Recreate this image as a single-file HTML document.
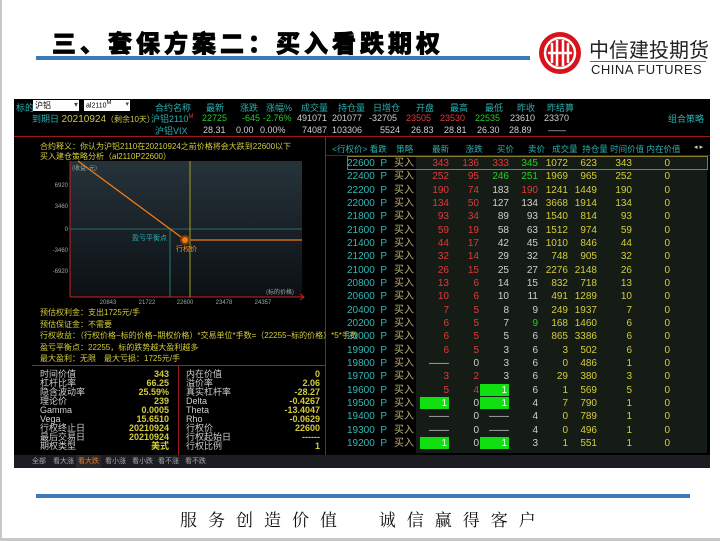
<!DOCTYPE html>
<html><head><meta charset="utf-8"><style>
*{margin:0;padding:0;box-sizing:border-box}
body{width:720px;height:541px;background:#fff;position:relative;overflow:hidden;font-family:"Liberation Sans","Noto Sans CJK SC",sans-serif}
.a{position:absolute;white-space:nowrap}
#scr{position:absolute;left:14px;top:99px;width:696px;height:369px;background:#000;overflow:hidden;font-size:9px;color:#c8c8c8}
.hd{color:#2ab0b0}
.r{color:#e03a3a}.g{color:#22d022}.w{color:#cfcfcf}.y{color:#d4cc3a}.t{color:#30b8b8}.k{color:#b9b070}
.row{position:absolute;left:316px;width:380px;height:13px;font-size:10px;line-height:13px}
.row span{position:absolute;text-align:right}
.c0{left:17px;width:36px;text-align:left!important;color:#30b8b8}
.c1{left:47px;width:10px;color:#30b8b8}
.c2{left:60px;width:24px;color:#b9b070}
.c3{left:90px;width:29px}
.c4{left:120px;width:29px}
.c5{left:150px;width:29px}
.c6{left:180px;width:28px}
.c7{left:208px;width:30px;color:#d4cc3a}
.c8{left:238px;width:29px;color:#d4cc3a}
.c9{left:270px;width:32px;color:#d4cc3a}
.c10{left:330px;width:10px;color:#d4cc3a}
.gb{background:#10e010;color:#fff!important;height:12px;top:0;padding-right:2px}
.st{position:absolute;font-size:9px;line-height:9px}
</style></head><body>
<div class="a" style="left:0;top:0;width:2px;height:541px;background:#c8c8c8"></div>
<div class="a" style="left:0;top:538px;width:720px;height:3px;background:#c8c8c8"></div>
<div class="a" style="left:52px;top:24px;font-size:24px;font-weight:900;color:#000;letter-spacing:4px;font-family:'Noto Sans CJK SC',sans-serif;-webkit-text-stroke:0.8px #000">三、套保方案二：买入看跌期权</div>
<div class="a" style="left:36px;top:56px;width:494px;height:4px;background:#3a7ab8"></div>
<svg class="a" style="left:538px;top:31px" width="44" height="44" viewBox="0 0 44 44"><circle cx="22" cy="22" r="21" fill="#d8121a"/><circle cx="22" cy="22" r="15" fill="none" stroke="#fff" stroke-width="2.5"/><path d="M14 12v20M19 9v26M25 9v26M30 12v20M10 22h24" stroke="#fff" stroke-width="2.5" fill="none"/></svg>
<div class="a" style="left:589px;top:34px;font-size:20px;color:#222">中信建投期货</div>
<div class="a" style="left:590px;top:61px;width:116px;height:1px;background:#666"></div>
<div class="a" style="left:591px;top:62px;font-size:13px;color:#222;letter-spacing:0.5px">CHINA FUTURES</div>

<div id="scr">
<div class="a hd" style="left:2px;top:2px">标的</div>
<div class="a" style="left:19px;top:1px;width:46px;height:11px;background:#fff;color:#000;font-size:8px;padding-left:2px">沪铝<span style="position:absolute;right:1px;color:#446">▾</span></div>
<div class="a" style="left:70px;top:1px;width:46px;height:11px;background:#fff;color:#000;font-size:7px;padding-left:2px">al2110<sup>M</sup><span style="position:absolute;right:1px;color:#446">▾</span></div>
<div class="a hd" style="left:18px;top:13px">到期日 <span style="color:#c8c848;font-size:10px">20210924</span><span style="color:#c8c848;font-size:8px">（剩余10天）</span></div>
<div class="a hd" style="left:141px;top:2px">合约名称</div>
<div class="a hd" style="left:192px;top:2px">最新</div>
<div class="a hd" style="left:226px;top:2px">涨跌</div>
<div class="a hd" style="left:252px;top:2px">涨幅%</div>
<div class="a hd" style="left:287px;top:2px">成交量</div>
<div class="a hd" style="left:324px;top:2px">持仓量</div>
<div class="a hd" style="left:359px;top:2px">日增仓</div>
<div class="a hd" style="left:402px;top:2px">开盘</div>
<div class="a hd" style="left:436px;top:2px">最高</div>
<div class="a hd" style="left:471px;top:2px">最低</div>
<div class="a hd" style="left:503px;top:2px">昨收</div>
<div class="a hd" style="left:533px;top:2px">昨结算</div>
<div class="a hd" style="left:654px;top:13px">组合策略</div>
<div class="a" style="left:137px;top:13px;font-size:9px;color:#2ab0b0">沪铝2110<sup style="color:#e33;font-size:6px">M</sup></div>
<div class="a g" style="left:188px;top:14px">22725</div>
<div class="a g" style="left:228px;top:14px">-645</div>
<div class="a g" style="left:249px;top:14px">-2.76%</div>
<div class="a w" style="left:283px;top:14px">491071</div>
<div class="a w" style="left:318px;top:14px">201077</div>
<div class="a w" style="left:355px;top:14px">-32705</div>
<div class="a r" style="left:392px;top:14px">23505</div>
<div class="a r" style="left:426px;top:14px">23530</div>
<div class="a g" style="left:461px;top:14px">22535</div>
<div class="a w" style="left:496px;top:14px">23610</div>
<div class="a w" style="left:530px;top:14px">23370</div>
<div class="a hd" style="left:141px;top:25px">沪铝VIX</div>
<div class="a w" style="left:189px;top:26px">28.31</div>
<div class="a w" style="left:222px;top:26px">0.00</div>
<div class="a w" style="left:246px;top:26px">0.00%</div>
<div class="a w" style="left:288px;top:26px">74087</div>
<div class="a w" style="left:318px;top:26px">103306</div>
<div class="a w" style="left:366px;top:26px">5524</div>
<div class="a w" style="left:397px;top:26px">26.83</div>
<div class="a w" style="left:430px;top:26px">28.81</div>
<div class="a w" style="left:463px;top:26px">26.30</div>
<div class="a w" style="left:495px;top:26px">28.89</div>
<div class="a w" style="left:534px;top:26px">——</div>
<div class="a" style="left:0;top:37px;width:696px;height:1px;background:#a01818"></div>
<div class="a" style="left:311px;top:37px;width:1px;height:319px;background:#a01818"></div>
<div class="a" style="left:312px;top:56px;width:384px;height:1px;background:#7a1414"></div>

<div class="a y" style="left:26px;top:42px;font-size:8px">合约释义：你认为沪铝2110在20210924之前价格将会大跌到22600以下</div>
<div class="a y" style="left:26px;top:52px;font-size:8px">买入建仓策略分析（al2110P22600）</div>
<div class="a" style="left:56px;top:62px;width:232px;height:136px;background:linear-gradient(#26333a,#0c1014)"></div>
<svg class="a" style="left:0;top:60px" width="300" height="150">
<line x1="56" y1="2" x2="56" y2="138" stroke="#d02020"/>
<line x1="56" y1="138" x2="290" y2="138" stroke="#d02020"/>
<path d="M286 135l4 3-4 3" stroke="#d02020" fill="none"/>
<line x1="56" y1="70" x2="288" y2="70" stroke="#2a6a6a"/>
<line x1="156" y1="70" x2="156" y2="138" stroke="#2a7a7a"/>
<line x1="176" y1="2" x2="176" y2="138" stroke="#a0a020"/>
<path d="M64 2L171 81H288" stroke="#f07a10" stroke-width="1.3" fill="none"/>
<circle cx="171" cy="81" r="4" fill="#f07a10" stroke="#7a3a08" stroke-width="2"/>
<g font-size="6" fill="#9aa" font-family="Liberation Sans">
<text x="54" y="28" text-anchor="end">6920</text><text x="54" y="49" text-anchor="end">3460</text><text x="54" y="72" text-anchor="end">0</text><text x="54" y="93" text-anchor="end">-3460</text><text x="54" y="114" text-anchor="end">-6920</text>
<text x="94" y="145" text-anchor="middle">20843</text><text x="133" y="145" text-anchor="middle">21722</text><text x="171" y="145" text-anchor="middle">22600</text><text x="210" y="145" text-anchor="middle">23478</text><text x="249" y="145" text-anchor="middle">24357</text>
<text x="58" y="11" font-family="Noto Sans CJK SC">(收益: 元)</text><text x="252" y="135" font-family="Noto Sans CJK SC">(标的价格)</text></g>
<text x="118" y="81" font-size="7" fill="#2ab0b0" font-family="Noto Sans CJK SC">盈亏平衡点</text>
<text x="162" y="92" font-size="7" fill="#f08a30" font-family="Noto Sans CJK SC">行权价</text>
</svg>
<div class="a y" style="left:26px;top:208px;font-size:8px">预估权利金：支出1725元/手</div>
<div class="a y" style="left:26px;top:220px;font-size:8px">预估保证金：不需要</div>
<div class="a y" style="left:26px;top:231px;font-size:8px">行权收益：（行权价格−标的价格−期权价格）*交易单位*手数=（22255−标的价格）*5*手数</div>
<div class="a y" style="left:26px;top:243px;font-size:8px">盈亏平衡点：22255，标的跌势越大盈利越多</div>
<div class="a y" style="left:26px;top:254px;font-size:8px">最大盈利：无限　最大亏损：1725元/手</div>
<div class="a" style="left:18px;top:266px;width:293px;height:1px;background:#b01818"></div>
<div class="a" style="left:164px;top:267px;width:1px;height:89px;background:#a01818"></div>
<div class="st w" style="left:26px;top:271px;line-height:9px">时间价值<br>杠杆比率<br>隐含波动率<br>理论价<br>Gamma<br>Vega<br>行权终止日<br>最后交易日<br>期权类型</div>
<div class="st y" style="left:100px;top:271px;width:55px;text-align:right;font-weight:bold">343<br>66.25<br>25.59%<br>239<br>0.0005<br>15.6510<br>20210924<br>20210924<br>美式</div>
<div class="st w" style="left:172px;top:271px">内在价值<br>溢价率<br>真实杠杆率<br>Delta<br>Theta<br>Rho<br>行权价<br>行权起始日<br>行权比例</div>
<div class="st y" style="left:250px;top:271px;width:56px;text-align:right;font-weight:bold">0<br>2.06<br>-28.27<br>-0.4267<br>-13.4047<br>-0.0629<br>22600<br>------<br>1</div>
<div class="a" style="left:0;top:356px;width:696px;height:13px;background:#1c1d22;font-size:7px;line-height:13px;color:#aaa">
<span class="a" style="left:18px">全部</span><span class="a" style="left:39px">看大涨</span><span class="a" style="left:62px;width:25px;height:13px;background:#2a2a2e;color:#f07a20;padding-left:2px">看大跌</span><span class="a" style="left:91px">看小涨</span><span class="a" style="left:118px">看小跌</span><span class="a" style="left:144px">看不涨</span><span class="a" style="left:171px">看不跌</span></div>

<div class="a" style="left:402px;top:58px;width:291px;height:296px;background:#151c15"></div>
<div class="a hd" style="left:318px;top:44px;font-size:8.5px">&lt;行权价&gt; 看跌&nbsp;&nbsp;&nbsp;&nbsp;策略&nbsp;&nbsp;&nbsp;&nbsp;&nbsp;&nbsp;&nbsp;&nbsp;最新&nbsp;&nbsp;&nbsp;&nbsp;&nbsp;&nbsp;&nbsp;涨跌&nbsp;&nbsp;&nbsp;&nbsp;&nbsp;&nbsp;买价&nbsp;&nbsp;&nbsp;&nbsp;&nbsp;&nbsp;卖价&nbsp;&nbsp;&nbsp;成交量&nbsp;&nbsp;持仓量&nbsp;时间价值&nbsp;内在价值</div>
<div class="a w" style="left:680px;top:44px;font-size:7px">◂ ▸</div>
<div class="a" style="left:333px;top:57px;width:361px;height:14px;border:1px solid #8a7a30"></div>
<div class="row" style="top:58px"><span class="c0">22600</span><span class="c1">P</span><span class="c2">买入</span><span class="c3 r">343</span><span class="c4 r">136</span><span class="c5 r">333</span><span class="c6 g">345</span><span class="c7">1072</span><span class="c8">623</span><span class="c9">343</span><span class="c10">0</span></div>
<div class="row" style="top:71px"><span class="c0">22400</span><span class="c1">P</span><span class="c2">买入</span><span class="c3 r">252</span><span class="c4 r">95</span><span class="c5 g">246</span><span class="c6 g">251</span><span class="c7">1969</span><span class="c8">965</span><span class="c9">252</span><span class="c10">0</span></div>
<div class="row" style="top:85px"><span class="c0">22200</span><span class="c1">P</span><span class="c2">买入</span><span class="c3 r">190</span><span class="c4 r">74</span><span class="c5 w">183</span><span class="c6 r">190</span><span class="c7">1241</span><span class="c8">1449</span><span class="c9">190</span><span class="c10">0</span></div>
<div class="row" style="top:98px"><span class="c0">22000</span><span class="c1">P</span><span class="c2">买入</span><span class="c3 r">134</span><span class="c4 r">50</span><span class="c5 w">127</span><span class="c6 w">134</span><span class="c7">3668</span><span class="c8">1914</span><span class="c9">134</span><span class="c10">0</span></div>
<div class="row" style="top:111px"><span class="c0">21800</span><span class="c1">P</span><span class="c2">买入</span><span class="c3 r">93</span><span class="c4 r">34</span><span class="c5 w">89</span><span class="c6 w">93</span><span class="c7">1540</span><span class="c8">814</span><span class="c9">93</span><span class="c10">0</span></div>
<div class="row" style="top:125px"><span class="c0">21600</span><span class="c1">P</span><span class="c2">买入</span><span class="c3 r">59</span><span class="c4 r">19</span><span class="c5 w">58</span><span class="c6 w">63</span><span class="c7">1512</span><span class="c8">974</span><span class="c9">59</span><span class="c10">0</span></div>
<div class="row" style="top:138px"><span class="c0">21400</span><span class="c1">P</span><span class="c2">买入</span><span class="c3 r">44</span><span class="c4 r">17</span><span class="c5 w">42</span><span class="c6 w">45</span><span class="c7">1010</span><span class="c8">846</span><span class="c9">44</span><span class="c10">0</span></div>
<div class="row" style="top:151px"><span class="c0">21200</span><span class="c1">P</span><span class="c2">买入</span><span class="c3 r">32</span><span class="c4 r">14</span><span class="c5 w">29</span><span class="c6 w">32</span><span class="c7">748</span><span class="c8">905</span><span class="c9">32</span><span class="c10">0</span></div>
<div class="row" style="top:165px"><span class="c0">21000</span><span class="c1">P</span><span class="c2">买入</span><span class="c3 r">26</span><span class="c4 r">15</span><span class="c5 w">25</span><span class="c6 w">27</span><span class="c7">2276</span><span class="c8">2148</span><span class="c9">26</span><span class="c10">0</span></div>
<div class="row" style="top:178px"><span class="c0">20800</span><span class="c1">P</span><span class="c2">买入</span><span class="c3 r">13</span><span class="c4 r">6</span><span class="c5 w">14</span><span class="c6 w">15</span><span class="c7">832</span><span class="c8">718</span><span class="c9">13</span><span class="c10">0</span></div>
<div class="row" style="top:191px"><span class="c0">20600</span><span class="c1">P</span><span class="c2">买入</span><span class="c3 r">10</span><span class="c4 r">6</span><span class="c5 w">10</span><span class="c6 w">11</span><span class="c7">491</span><span class="c8">1289</span><span class="c9">10</span><span class="c10">0</span></div>
<div class="row" style="top:205px"><span class="c0">20400</span><span class="c1">P</span><span class="c2">买入</span><span class="c3 r">7</span><span class="c4 r">5</span><span class="c5 w">8</span><span class="c6 w">9</span><span class="c7">249</span><span class="c8">1937</span><span class="c9">7</span><span class="c10">0</span></div>
<div class="row" style="top:218px"><span class="c0">20200</span><span class="c1">P</span><span class="c2">买入</span><span class="c3 r">6</span><span class="c4 r">5</span><span class="c5 w">7</span><span class="c6 g">9</span><span class="c7">168</span><span class="c8">1460</span><span class="c9">6</span><span class="c10">0</span></div>
<div class="row" style="top:231px"><span class="c0">20000</span><span class="c1">P</span><span class="c2">买入</span><span class="c3 r">6</span><span class="c4 r">5</span><span class="c5 w">5</span><span class="c6 w">6</span><span class="c7">865</span><span class="c8">3386</span><span class="c9">6</span><span class="c10">0</span></div>
<div class="row" style="top:245px"><span class="c0">19900</span><span class="c1">P</span><span class="c2">买入</span><span class="c3 r">6</span><span class="c4 r">5</span><span class="c5 w">3</span><span class="c6 w">6</span><span class="c7">3</span><span class="c8">502</span><span class="c9">6</span><span class="c10">0</span></div>
<div class="row" style="top:258px"><span class="c0">19800</span><span class="c1">P</span><span class="c2">买入</span><span class="c3 w">——</span><span class="c4 w">0</span><span class="c5 w">3</span><span class="c6 w">6</span><span class="c7">0</span><span class="c8">486</span><span class="c9">1</span><span class="c10">0</span></div>
<div class="row" style="top:271px"><span class="c0">19700</span><span class="c1">P</span><span class="c2">买入</span><span class="c3 r">3</span><span class="c4 r">2</span><span class="c5 w">3</span><span class="c6 w">6</span><span class="c7">29</span><span class="c8">380</span><span class="c9">3</span><span class="c10">0</span></div>
<div class="row" style="top:285px"><span class="c0">19600</span><span class="c1">P</span><span class="c2">买入</span><span class="c3 r">5</span><span class="c4 r">4</span><span class="c5 gb">1</span><span class="c6 w">6</span><span class="c7">1</span><span class="c8">569</span><span class="c9">5</span><span class="c10">0</span></div>
<div class="row" style="top:298px"><span class="c0">19500</span><span class="c1">P</span><span class="c2">买入</span><span class="c3 gb">1</span><span class="c4 w">0</span><span class="c5 gb">1</span><span class="c6 w">4</span><span class="c7">7</span><span class="c8">790</span><span class="c9">1</span><span class="c10">0</span></div>
<div class="row" style="top:311px"><span class="c0">19400</span><span class="c1">P</span><span class="c2">买入</span><span class="c3 w">——</span><span class="c4 w">0</span><span class="c5 w">——</span><span class="c6 w">4</span><span class="c7">0</span><span class="c8">789</span><span class="c9">1</span><span class="c10">0</span></div>
<div class="row" style="top:325px"><span class="c0">19300</span><span class="c1">P</span><span class="c2">买入</span><span class="c3 w">——</span><span class="c4 w">0</span><span class="c5 w">——</span><span class="c6 w">4</span><span class="c7">0</span><span class="c8">496</span><span class="c9">1</span><span class="c10">0</span></div>
<div class="row" style="top:338px"><span class="c0">19200</span><span class="c1">P</span><span class="c2">买入</span><span class="c3 gb">1</span><span class="c4 w">0</span><span class="c5 gb">1</span><span class="c6 w">3</span><span class="c7">1</span><span class="c8">551</span><span class="c9">1</span><span class="c10">0</span></div>
</div>

<div class="a" style="left:36px;top:494px;width:654px;height:4px;background:#3a7ab8"></div>
<div class="a" style="left:180px;top:506px;font-size:17px;color:#111;letter-spacing:11px;font-family:'Noto Serif CJK SC',serif">服务创造价值&nbsp;&nbsp;诚信赢得客户</div>
</body></html>
